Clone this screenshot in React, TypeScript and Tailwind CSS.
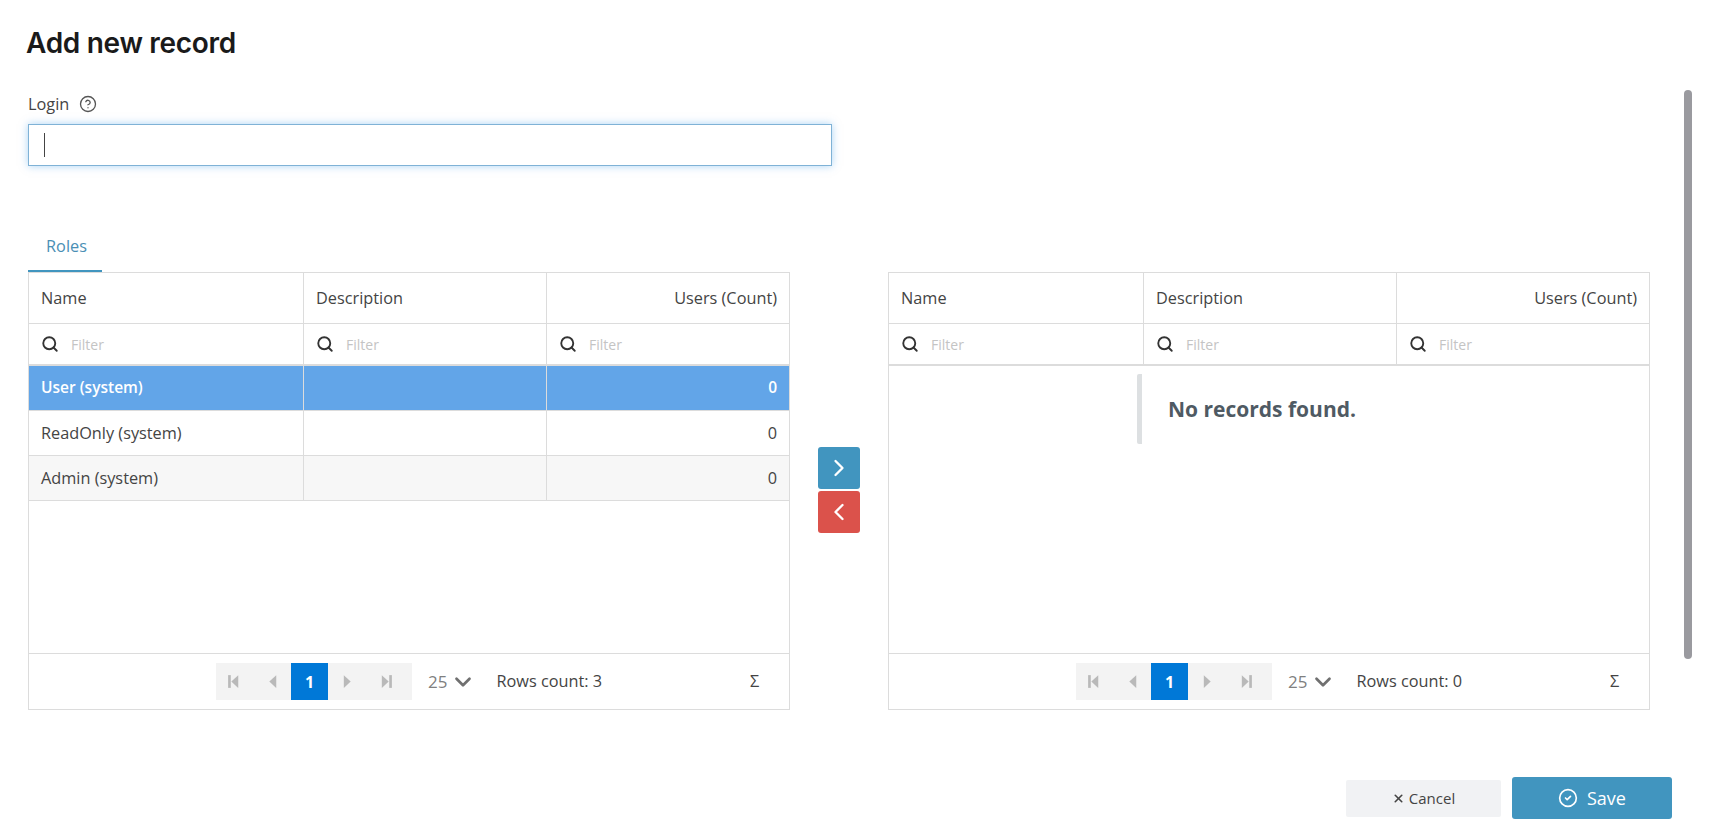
import React from 'react';
import { Search, ChevronRight, ChevronLeft, ChevronDown, X, CircleCheck, CircleHelp } from 'lucide-react';

function PagerIcon({ dir, bar }: { dir: 'left' | 'right'; bar?: boolean }) {
  const triangle = dir === 'left' ? 'M11.5 2 L5 8 L11.5 14 Z' : 'M4.5 2 L11 8 L4.5 14 Z';
  const edge = dir === 'left' ? 'M2 2 H4.5 V14 H2 Z' : 'M11.5 2 H14 V14 H11.5 Z';
  return (
    <svg width="17" height="17" viewBox="0 0 16 16" fill="#b9b9b9">
      <path d={triangle} />
      {bar && <path d={edge} />}
    </svg>
  );
}

function Pager() {
  return (
    <div className="flex h-[37px] w-[196px] bg-[#f3f3f3]">
      <div className="flex w-[37px] items-center justify-center"><PagerIcon dir="left" bar /></div>
      <div className="flex w-[38px] items-center justify-center"><PagerIcon dir="left" /></div>
      <div className="flex w-[37px] items-center justify-center bg-[#0078d7] text-[16px] font-bold text-white">1</div>
      <div className="flex w-[39px] items-center justify-center"><PagerIcon dir="right" /></div>
      <div className="flex w-[37px] items-center justify-center"><PagerIcon dir="right" bar /></div>
    </div>
  );
}

interface RoleRow {
  name: string;
  count: string;
  rowClass: string;
}

function RolesTable({ cols, rows, rowsCount }: { cols: string; rows: RoleRow[]; rowsCount: number }) {
  const filterCell = (key: number) => (
    <div key={key} className="flex items-center gap-[12px] border-l border-[#dcdcdc] pl-[12px] first:border-l-0">
      <Search className="h-[18px] w-[18px] text-[#333]" strokeWidth={2.5} />
      <span className="text-[14px] text-[#c4c4c4]">Filter</span>
    </div>
  );

  return (
    <div className="flex h-[438px] w-[762px] flex-col border border-[#dcdcdc]">
      <div className={`grid h-[51px] shrink-0 border-b border-[#dcdcdc] ${cols}`}>
        <div className="flex items-center pl-[12px]">Name</div>
        <div className="flex items-center border-l border-[#dcdcdc] pl-[12px]">Description</div>
        <div className="flex items-center justify-end border-l border-[#dcdcdc] pr-[12px]">Users (Count)</div>
      </div>
      <div className={`grid h-[42px] shrink-0 border-b-2 border-[#dcdcdc] ${cols}`}>
        {[0, 1, 2].map(filterCell)}
      </div>
      <div className="flex-1">
        {rows.map((row) => (
          <div key={row.name} className={`grid h-[45px] border-b border-[#dcdcdc] ${cols} ${row.rowClass}`}>
            <div className="flex items-center pl-[12px]">{row.name}</div>
            <div className="border-l border-[#dcdcdc]" />
            <div className="flex items-center justify-end border-l border-[#dcdcdc] pr-[12px]">{row.count}</div>
          </div>
        ))}
        {rows.length === 0 && (
          <div className="ml-[248px] mt-[8px] flex h-[70px] items-center rounded-[2px] border-l-[5px] border-[#dde0e2] pl-[26px] pt-[2px] text-[21px] font-bold text-[#4f5a63]">
            No records found.
          </div>
        )}
      </div>
      <div className="flex h-[56px] shrink-0 items-center border-t border-[#dcdcdc] pl-[187px]">
        <Pager />
        <span className="ml-[16px] text-[17px] text-[#808080]">25</span>
        <ChevronDown className="ml-[3px] h-[26px] w-[26px] text-[#707070]" strokeWidth={2.5} />
        <span className="ml-[20px]">Rows count: {rowsCount}</span>
        <span className="ml-[148px]">Σ</span>
      </div>
    </div>
  );
}

const roles: RoleRow[] = [
  { name: 'User (system)', count: '0', rowClass: 'bg-[#62a5e8] text-white text-[15.5px] font-semibold' },
  { name: 'ReadOnly (system)', count: '0', rowClass: 'bg-white' },
  { name: 'Admin (system)', count: '0', rowClass: 'bg-[#f7f7f7]' },
];

export default function App() {
  return (
    <div className="relative h-[836px] overflow-hidden bg-white pl-[28px] font-['Open_Sans',sans-serif] text-[16.3px] text-[#444]">
      <h1 className="-ml-[2px] pt-[25px] font-['Inter',sans-serif] text-[28px] leading-[36px] font-semibold tracking-[-0.3px] text-[#1a1a1a]">
        Add new record
      </h1>
      <div className="mt-[32px] flex h-[22px] items-center gap-[10px]">
        <span>Login</span>
        <CircleHelp className="h-[18px] w-[18px] text-[#555]" strokeWidth={1.75} />
      </div>
      <div className="mt-[9px] flex h-[42px] w-[804px] items-center border border-[#7fb2d6] pl-[15px] shadow-[0_0_8px_rgba(90,170,235,0.5)]">
        <div className="h-[24px] w-px bg-[#444]" />
      </div>
      <div className="mt-[66px] h-[40px] w-[74px] border-b-2 border-[#4195bf] pt-[2px] pl-[3px] text-center text-[#4a8fb5]">Roles</div>
      <div className="flex">
        <RolesTable cols="grid-cols-[274px_243px_1fr]" rows={roles} rowsCount={3} />
        <div className="mt-[175px] ml-[28px] flex w-[42px] flex-col gap-[2px]">
          <button className="flex h-[42px] items-center justify-center rounded-[3px] bg-[#4195bf] text-white">
            <ChevronRight className="h-[28px] w-[28px]" strokeWidth={2} />
          </button>
          <button className="flex h-[42px] items-center justify-center rounded-[3px] bg-[#db524b] text-white">
            <ChevronLeft className="h-[28px] w-[28px]" strokeWidth={2} />
          </button>
        </div>
        <div className="ml-[28px]">
          <RolesTable cols="grid-cols-[254px_253px_1fr]" rows={[]} rowsCount={0} />
        </div>
      </div>
      <div className="mt-[67px] flex w-[1644px] items-center justify-end gap-[11px]">
        <button className="flex h-[37px] w-[155px] items-center justify-center gap-[4px] rounded-[2px] bg-[#f1f2f4] text-[15px]">
          <X className="h-[13px] w-[13px]" strokeWidth={3} />
          Cancel
        </button>
        <button className="flex h-[42px] w-[160px] items-center justify-center gap-[9px] rounded-[3px] bg-[#4195bf] text-[18px] text-white">
          <CircleCheck className="h-[20px] w-[20px]" strokeWidth={2} />
          Save
        </button>
      </div>
      <div className="absolute top-[90px] left-[1684px] h-[569px] w-[8px] rounded-full bg-[#9a9a9f]" />
    </div>
  );
}
